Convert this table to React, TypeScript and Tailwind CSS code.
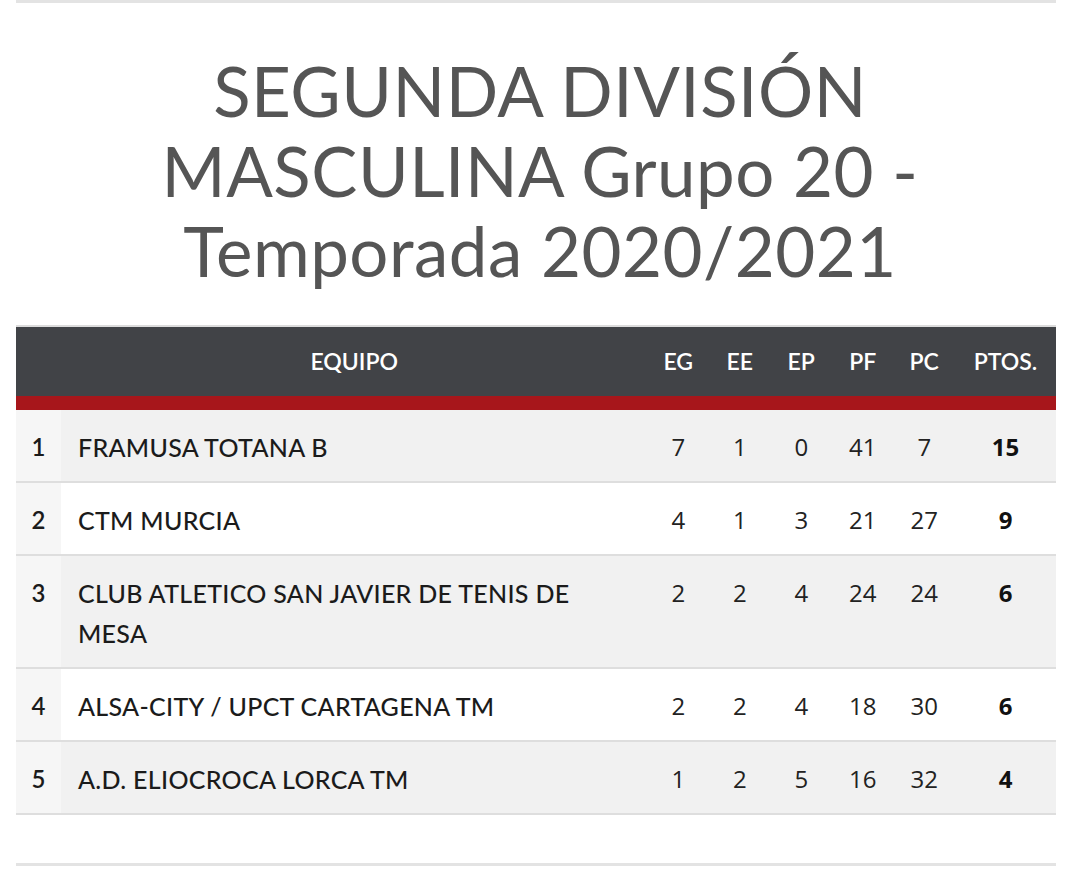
import React from 'react'

type Row = {
  pos: number
  team: string
  eg: number
  ee: number
  ep: number
  pf: number
  pc: number
  pts: number
}

const rows: Row[] = [
  { pos: 1, team: 'FRAMUSA TOTANA B', eg: 7, ee: 1, ep: 0, pf: 41, pc: 7, pts: 15 },
  { pos: 2, team: 'CTM MURCIA', eg: 4, ee: 1, ep: 3, pf: 21, pc: 27, pts: 9 },
  { pos: 3, team: 'CLUB ATLETICO SAN JAVIER DE TENIS DE MESA', eg: 2, ee: 2, ep: 4, pf: 24, pc: 24, pts: 6 },
  { pos: 4, team: 'ALSA-CITY / UPCT CARTAGENA TM', eg: 2, ee: 2, ep: 4, pf: 18, pc: 30, pts: 6 },
  { pos: 5, team: 'A.D. ELIOCROCA LORCA TM', eg: 1, ee: 2, ep: 5, pf: 16, pc: 32, pts: 4 },
]

const heads = ['EG', 'EE', 'EP', 'PF', 'PC']

export default function App() {
  return (
    <div className="w-[1080px] h-[895px] bg-white overflow-hidden font-['Lato',sans-serif]">
      {/* top rule */}
      <div className="ml-4 w-[1040px] h-[3px] bg-[#e3e3e3]" />

      {/* title */}
      <h1 className="mt-[48px] px-10 text-center text-[69px] leading-[80px] text-[#555555] font-normal tracking-[0.5px]">
        SEGUNDA DIVISIÓN
        <br />
        MASCULINA Grupo 20 -
        <br />
        Temporada 2020/2021
      </h1>

      {/* table */}
      <div className="ml-4 w-[1040px] mt-[34px] border-t-2 border-[#dcdcdc]">
        <div className="flex h-[69px] items-center bg-[#414347] text-white text-[23px] font-semibold">
          <div className="w-[45px]" />
          <div className="flex-1 text-center">EQUIPO</div>
          {heads.map((h) => (
            <div key={h} className="w-[61.5px] text-center">
              {h}
            </div>
          ))}
          <div className="w-[101px] text-center">PTOS.</div>
        </div>
        <div className="h-[14px] bg-[#a7161b]" />

        {rows.map((r, i) => (
          <div
            key={r.pos}
            className={
              'flex border-b-2 border-[#dedede] ' + (i % 2 === 0 ? 'bg-[#f1f1f1]' : 'bg-white')
            }
          >
            <div className="w-[45px] bg-[#f6f6f6] pt-[17px] text-center text-[24px] leading-[40px] font-semibold text-[#1b1b1b]">
              {r.pos}
            </div>
            <div className="flex-1 pl-[17px] pr-4 pt-[17px] pb-[14px] text-[25px] leading-[40px] tracking-[0.3px] text-[#1b1b1b] font-medium">
              {r.team}
            </div>
            {[r.eg, r.ee, r.ep, r.pf, r.pc].map((n, k) => (
              <div
                key={k}
                className="w-[61.5px] pt-[17px] text-center text-[24px] leading-[40px] text-[#222222] font-['Open_Sans',sans-serif]"
              >
                {n}
              </div>
            ))}
            <div className="w-[101px] pt-[17px] text-center text-[24px] leading-[40px] font-bold text-[#111111] font-['Open_Sans',sans-serif]">
              {r.pts}
            </div>
          </div>
        ))}
      </div>

      {/* bottom rule */}
      <div className="ml-4 w-[1040px] mt-[48px] h-[3px] bg-[#e3e3e3]" />
    </div>
  )
}
